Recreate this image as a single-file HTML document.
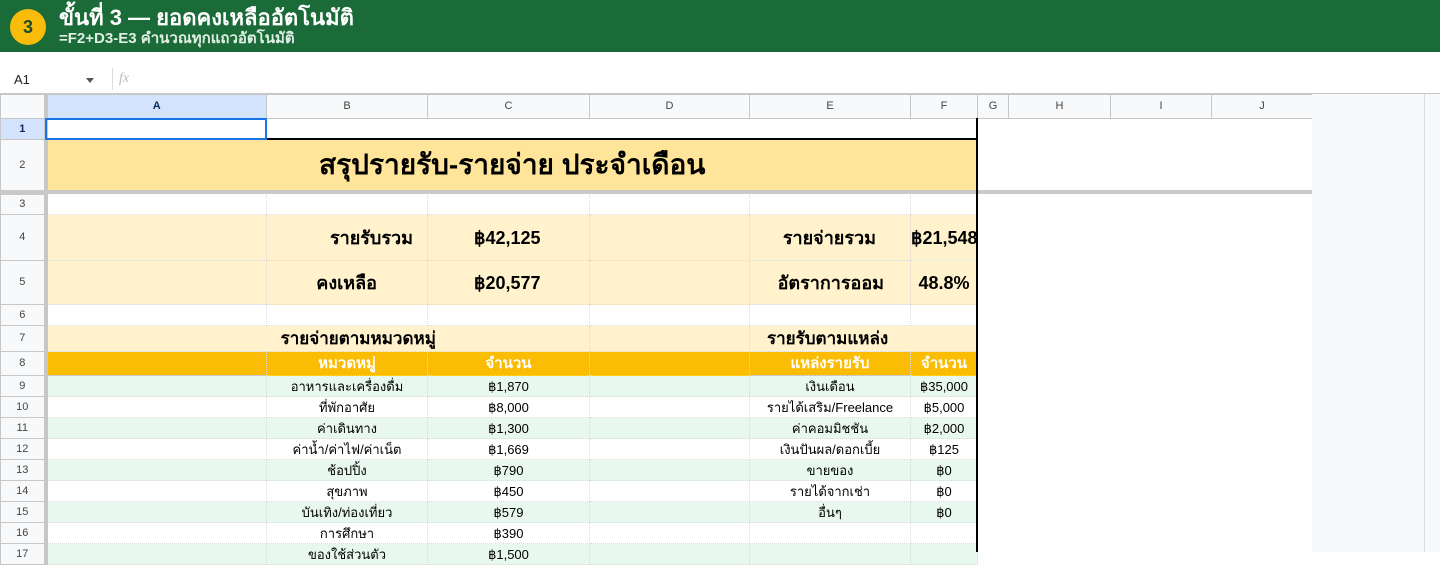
<!DOCTYPE html>
<html><head><meta charset="utf-8"><style>
*{margin:0;padding:0;box-sizing:border-box}
body{width:1440px;height:552px;overflow:hidden;background:#fff;font-family:"Liberation Sans","Noto Sans CJK SC",sans-serif;position:relative}
.top{position:absolute;left:0;top:0;width:1440px;height:52px;background:#1b6b38;color:#fff}
.badge{position:absolute;left:10px;top:9px;width:36px;height:36px;border-radius:50%;background:#f9bc0b;color:#1b4d2a;font-size:18px;text-align:center;line-height:36px;font-weight:bold}
.t1{position:absolute;left:59px;top:4px;font-size:22px;font-weight:bold;line-height:28px}
.t2{position:absolute;left:59px;top:30px;font-size:15px;line-height:18px;color:#dfefe4;font-weight:bold}
.fbar{position:absolute;left:0;top:52px;width:1440px;height:42px;background:#fff;border-bottom:1px solid #c7c7c7}
.nb{position:absolute;left:14px;top:72px;font-size:13px;color:#222}
.dd{position:absolute;left:86px;top:78px;border:4px solid transparent;border-top:5px solid #555}
.fx{position:absolute;left:112px;top:68px;width:28px;height:22px;border-left:1px solid #ddd;color:#bbb;font-style:italic;font-size:14px;padding-left:6px;line-height:22px;font-family:"Liberation Serif",serif}
table{position:absolute;left:0;top:94px;border-collapse:collapse;table-layout:fixed;width:1312px}
td{border-right:1px dotted #dadada;border-bottom:1px dotted #dadada;font-size:13px;text-align:center;white-space:nowrap;overflow:visible;padding:0;color:#000;line-height:1}
td.n{border:0}
.h td{background:#f8f9fa;border:1px solid #c7c7c7;font-size:11px;color:#444;height:24px}
td.rh{background:#f8f9fa;border:1px solid #c7c7c7;color:#444;font-size:11px;border-right:4px solid #c7c7c7}
.y{background:#fff2cc}
.g{background:#e8f8ef}
.o{background:#fbbc04;color:#fff;font-weight:bold;font-size:15px}
.b{font-weight:bold;font-size:18px}
.side{position:absolute;left:1312px;top:94px;width:112px;height:458px;background:#f8f9fa}
.sb{position:absolute;left:1424px;top:94px;width:16px;height:458px;background:#f8f9fa;border-left:1px solid #ddd}
.freeze{position:absolute;left:0;top:190px;width:1312px;height:4px;background:#c9c9c9}
.vline{position:absolute;left:976px;top:118px;width:2px;height:434px;background:#000}
.hline{position:absolute;left:45px;top:138px;width:932px;height:2px;background:#000}
.sel{position:absolute;left:45px;top:118px;width:222px;height:22px;border:2px solid #1a73e8}
tr.r td{height:21px}
</style></head><body>
<div class="top"><div class="badge">3</div><div class="t1">ขั้นที่ 3 — ยอดคงเหลืออัตโนมัติ</div><div class="t2">=F2+D3-E3 คำนวณทุกแถวอัตโนมัติ</div></div>
<div class="fbar"></div><div class="nb">A1</div><div class="dd"></div><div class="fx">fx</div>
<table>
<colgroup><col style="width:45px"><col style="width:221px"><col style="width:161px"><col style="width:162px"><col style="width:160px"><col style="width:161px"><col style="width:67px"><col style="width:31px"><col style="width:102px"><col style="width:101px"><col style="width:101px"></colgroup>
<tr class="h"><td style="border-right:4px solid #c7c7c7"></td><td style="background:#d3e3fd;color:#0b2a5c;font-weight:bold">A</td><td>B</td><td>C</td><td>D</td><td>E</td><td>F</td><td>G</td><td>H</td><td>I</td><td>J</td></tr>
<tr style="height:21px"><td class="rh" style="background:#d3e3fd;color:#0b2a5c;font-weight:bold">1</td><td></td><td colspan="5"></td><td class="n" colspan="4"></td></tr>
<tr style="height:51px"><td class="rh">2</td><td colspan="6" style="background:#ffe599;font-weight:bold;font-size:28px">สรุปรายรับ-รายจ่าย ประจำเดือน</td><td class="n" colspan="4"></td></tr>
<tr style="height:4px"><td colspan="11" class="n"></td></tr>
<tr style="height:20px"><td class="rh">3</td><td></td><td></td><td></td><td></td><td></td><td></td><td class="n" colspan="4"></td></tr>
<tr style="height:46px"><td class="rh">4</td><td class="y"></td><td class="y b" style="text-align:right;padding-right:14px">รายรับรวม</td><td class="y b" style="text-align:left;padding-left:46px">฿42,125</td><td class="y"></td><td class="y b" style="text-align:right;padding-right:34px">รายจ่ายรวม</td><td class="y b" style="text-align:left;overflow:hidden">฿21,548</td><td class="n" colspan="4"></td></tr>
<tr style="height:44px"><td class="rh">5</td><td class="y"></td><td class="y b" style="text-align:right;padding-right:50px">คงเหลือ</td><td class="y b" style="text-align:left;padding-left:46px">฿20,577</td><td class="y"></td><td class="y b" style="text-align:right;padding-right:26px">อัตราการออม</td><td class="y b">48.8%</td><td class="n" colspan="4"></td></tr>
<tr style="height:21px"><td class="rh">6</td><td></td><td></td><td></td><td></td><td></td><td></td><td class="n" colspan="4"></td></tr>
<tr><td class="rh" style="height:26px">7</td><td class="y" colspan="3" style="font-weight:bold;font-size:17px;padding-left:80px">รายจ่ายตามหมวดหมู่</td><td class="y"></td><td class="y" colspan="2" style="font-weight:bold;font-size:17px;text-align:left;padding-left:17px">รายรับตามแหล่ง</td><td class="n" colspan="4"></td></tr>
<tr><td class="rh" style="height:24px">8</td><td class="o"></td><td class="o">หมวดหมู่</td><td class="o">จำนวน</td><td class="o"></td><td class="o">แหล่งรายรับ</td><td class="o">จำนวน</td><td class="n" colspan="4"></td></tr>
<tr class="r"><td class="rh">9</td><td class="g"></td><td class="g">อาหารและเครื่องดื่ม</td><td class="g">฿1,870</td><td class="g"></td><td class="g">เงินเดือน</td><td class="g">฿35,000</td><td class="n" colspan="4"></td></tr>
<tr class="r"><td class="rh">10</td><td></td><td>ที่พักอาศัย</td><td>฿8,000</td><td></td><td>รายได้เสริม/Freelance</td><td>฿5,000</td><td class="n" colspan="4"></td></tr>
<tr class="r"><td class="rh">11</td><td class="g"></td><td class="g">ค่าเดินทาง</td><td class="g">฿1,300</td><td class="g"></td><td class="g">ค่าคอมมิชชัน</td><td class="g">฿2,000</td><td class="n" colspan="4"></td></tr>
<tr class="r"><td class="rh">12</td><td></td><td>ค่าน้ำ/ค่าไฟ/ค่าเน็ต</td><td>฿1,669</td><td></td><td>เงินปันผล/ดอกเบี้ย</td><td>฿125</td><td class="n" colspan="4"></td></tr>
<tr class="r"><td class="rh">13</td><td class="g"></td><td class="g">ช้อปปิ้ง</td><td class="g">฿790</td><td class="g"></td><td class="g">ขายของ</td><td class="g">฿0</td><td class="n" colspan="4"></td></tr>
<tr class="r"><td class="rh">14</td><td></td><td>สุขภาพ</td><td>฿450</td><td></td><td>รายได้จากเช่า</td><td>฿0</td><td class="n" colspan="4"></td></tr>
<tr class="r"><td class="rh">15</td><td class="g"></td><td class="g">บันเทิง/ท่องเที่ยว</td><td class="g">฿579</td><td class="g"></td><td class="g">อื่นๆ</td><td class="g">฿0</td><td class="n" colspan="4"></td></tr>
<tr class="r"><td class="rh">16</td><td></td><td>การศึกษา</td><td>฿390</td><td></td><td></td><td></td><td class="n" colspan="4"></td></tr>
<tr class="r"><td class="rh">17</td><td class="g"></td><td class="g">ของใช้ส่วนตัว</td><td class="g">฿1,500</td><td class="g"></td><td class="g"></td><td class="g"></td><td class="n" colspan="4"></td></tr>
</table>
<div class="freeze"></div>
<div class="side"></div><div class="sb"></div>
<div class="vline"></div><div class="hline"></div>
<div class="sel"></div>
</body></html>
